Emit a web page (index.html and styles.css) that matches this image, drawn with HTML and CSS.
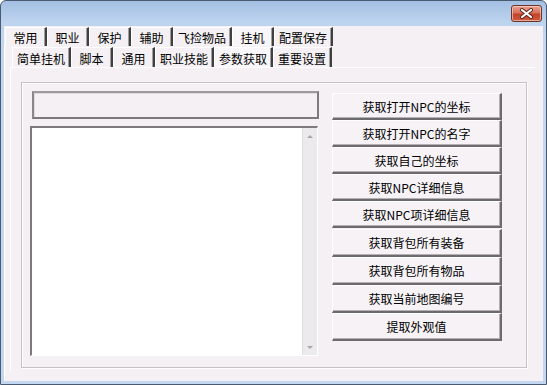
FILE: index.html
```html
<!DOCTYPE html>
<html lang="zh">
<head>
    <meta charset="UTF-8">
    <title>参数获取</title>
    <link rel="stylesheet" href="styles.css">
</head>
<body>
    <div class="window">
        <div class="titlebar">
            <button class="close-button">
                <svg width="15" height="11" viewBox="0 0 15 11">
                    <path d="M3 2 L12 9 M12 2 L3 9" stroke="#5a2418" stroke-width="4" stroke-linecap="round"/>
                    <path d="M3 2 L12 9 M12 2 L3 9" stroke="#ffffff" stroke-width="2.2" stroke-linecap="round"/>
                </svg>
            </button>
        </div>

        <div class="client">
            <div class="tabs outer-tabs">
                <span class="tab">常用</span>
                <span class="tab">职业</span>
                <span class="tab">保护</span>
                <span class="tab">辅助</span>
                <span class="tab wide">飞捡物品</span>
                <span class="tab active">挂机</span>
                <span class="tab wide">配置保存</span>
            </div>

            <div class="outer-panel">
                <div class="tabs inner-tabs">
                    <span class="tab wide">简单挂机</span>
                    <span class="tab">脚本</span>
                    <span class="tab">通用</span>
                    <span class="tab wide">职业技能</span>
                    <span class="tab wide active">参数获取</span>
                    <span class="tab wide">重要设置</span>
                </div>

                <div class="panel">
                    <div class="frame">
                        <div class="left-col">
                            <div class="edit"></div>
                            <div class="list">
                                <div class="scrollbar">
                                    <span class="arrow up"></span>
                                    <span class="arrow down"></span>
                                </div>
                            </div>
                        </div>

                        <div class="buttons">
                            <div class="btn-group">
                                <button class="action-button">获取打开NPC的坐标</button>
                                <button class="action-button">获取打开NPC的名字</button>
                                <button class="action-button">获取自己的坐标</button>
                                <button class="action-button">获取NPC详细信息</button>
                                <button class="action-button">获取NPC项详细信息</button>
                            </div>
                            <div class="btn-group second">
                                <button class="action-button">获取背包所有装备</button>
                                <button class="action-button">获取背包所有物品</button>
                                <button class="action-button">获取当前地图编号</button>
                                <button class="action-button">提取外观值</button>
                            </div>
                        </div>
                    </div>
                </div>
            </div>
        </div>
    </div>
</body>
</html>
```

FILE: styles.css
```css
body {
    margin: 0;
    background-color: #ffffff;
    font-family: "Noto Sans CJK SC", "Liberation Sans", sans-serif;
    font-size: 12px;
    color: #000000;
}

.window {
    width: 547px;
    height: 385px;
    box-sizing: border-box;
    border: 1px solid #4a5a70;
    border-radius: 6px 6px 0 0;
    background: linear-gradient(to bottom, #a3bfe2 0px, #bcd3ee 20px, #c3d8f0 40px, #c3d8f0 100%);
    display: flex;
    flex-direction: column;
}

.titlebar {
    height: 25px;
    display: flex;
    justify-content: flex-end;
    align-items: flex-start;
    padding-right: 4px;
}

.close-button {
    margin-top: 4px;
    width: 31px;
    height: 17px;
    padding: 0;
    border: 1px solid #6a3428;
    border-radius: 3px;
    background: linear-gradient(to bottom, #e8a493 0%, #d7715c 45%, #c2432a 55%, #cf5a3e 100%);
    box-shadow: inset 0 0 0 1px rgba(255, 220, 210, 0.6);
    display: flex;
    align-items: center;
    justify-content: center;
}

.client {
    flex: 1;
    margin: 0 3px 3px 3px;
    background-color: #f4f0f4;
    display: flex;
    flex-direction: column;
}

.tabs {
    display: flex;
    align-items: flex-end;
}

.outer-tabs {
    height: 20px;
    padding-left: 1px;
}

.inner-tabs {
    height: 21px;
    padding-left: 2px;
}

.tab {
    box-sizing: border-box;
    width: 42px;
    height: 19px;
    border-left: 1px solid #ffffff;
    border-top: 1px solid #ffffff;
    border-right: 2px solid #404040;
    box-shadow: inset -1px 0 0 #a0a0a0;
    text-align: center;
    line-height: 16px;
    padding-top: 2px;
    white-space: nowrap;
}

.inner-tabs .tab {
    height: 20px;
    padding-top: 3px;
}

.tab.wide {
    width: 59px;
}

.tab.active {
    background-color: #f8f6f8;
}

.outer-panel {
    flex: 1;
    border-left: 1px solid #ffffff;
    padding: 0 7px 0 5px;
    display: flex;
    flex-direction: column;
}

.panel {
    width: 525px;
    height: 304px;
    box-sizing: border-box;
    border-left: 1px solid #ffffff;
    border-top: 1px solid #ffffff;
    padding: 14px 0 0 10px;
}

.frame {
    width: 506px;
    height: 286px;
    box-sizing: border-box;
    border: 1px solid #c6c2c6;
    box-shadow: inset 1px 1px 0 #ffffff, 1px 1px 0 #ffffff;
    padding: 8px 0 0 8px;
    display: flex;
}

.left-col {
    width: 289px;
    display: flex;
    flex-direction: column;
}

.edit {
    margin-left: 2px;
    width: 287px;
    height: 28px;
    box-sizing: border-box;
    border: 2px solid #7c7a7c;
    border-top-color: #9c9a9c;
    border-left-color: #8a888a;
    box-shadow: inset 1px 1px 0 #dedade;
    background-color: #f4f0f4;
}

.list {
    margin-top: 7px;
    width: 288px;
    height: 230px;
    box-sizing: border-box;
    border-top: 2px solid #7c7a7c;
    border-left: 2px solid #7c7a7c;
    border-right: 1px solid #ffffff;
    border-bottom: 1px solid #ffffff;
    background-color: #ffffff;
    display: flex;
    justify-content: flex-end;
}

.scrollbar {
    width: 15px;
    background-color: #edeaed;
    border-left: 1px solid #e2dfe2;
    box-sizing: border-box;
    display: flex;
    flex-direction: column;
    justify-content: space-between;
    align-items: center;
    padding: 7px 0 6px;
}

.arrow {
    width: 0;
    height: 0;
    border-left: 3px solid transparent;
    border-right: 3px solid transparent;
}

.arrow.up {
    border-bottom: 3px solid #a8a6a8;
}

.arrow.down {
    border-top: 3px solid #a8a6a8;
}

.buttons {
    margin-left: 13px;
    margin-top: 2px;
    width: 170px;
    display: flex;
    flex-direction: column;
}

.btn-group {
    display: flex;
    flex-direction: column;
}

.btn-group.second {
    margin-top: 1px;
}

.action-button {
    height: 27px;
    width: 170px;
    margin: 0;
    padding: 0;
    box-sizing: border-box;
    background-color: #f6f2f6;
    border-top: 1px solid #ffffff;
    border-left: 1px solid #ffffff;
    border-right: 2px solid #6c6a6c;
    border-bottom: 2px solid #6c6a6c;
    box-shadow: inset -1px -1px 0 #b4b0b4;
    font-family: "Noto Sans CJK SC", "Liberation Sans", sans-serif;
    font-size: 12px;
    color: #000000;
    text-align: center;
}

.second .action-button {
    height: 28px;
}
```
